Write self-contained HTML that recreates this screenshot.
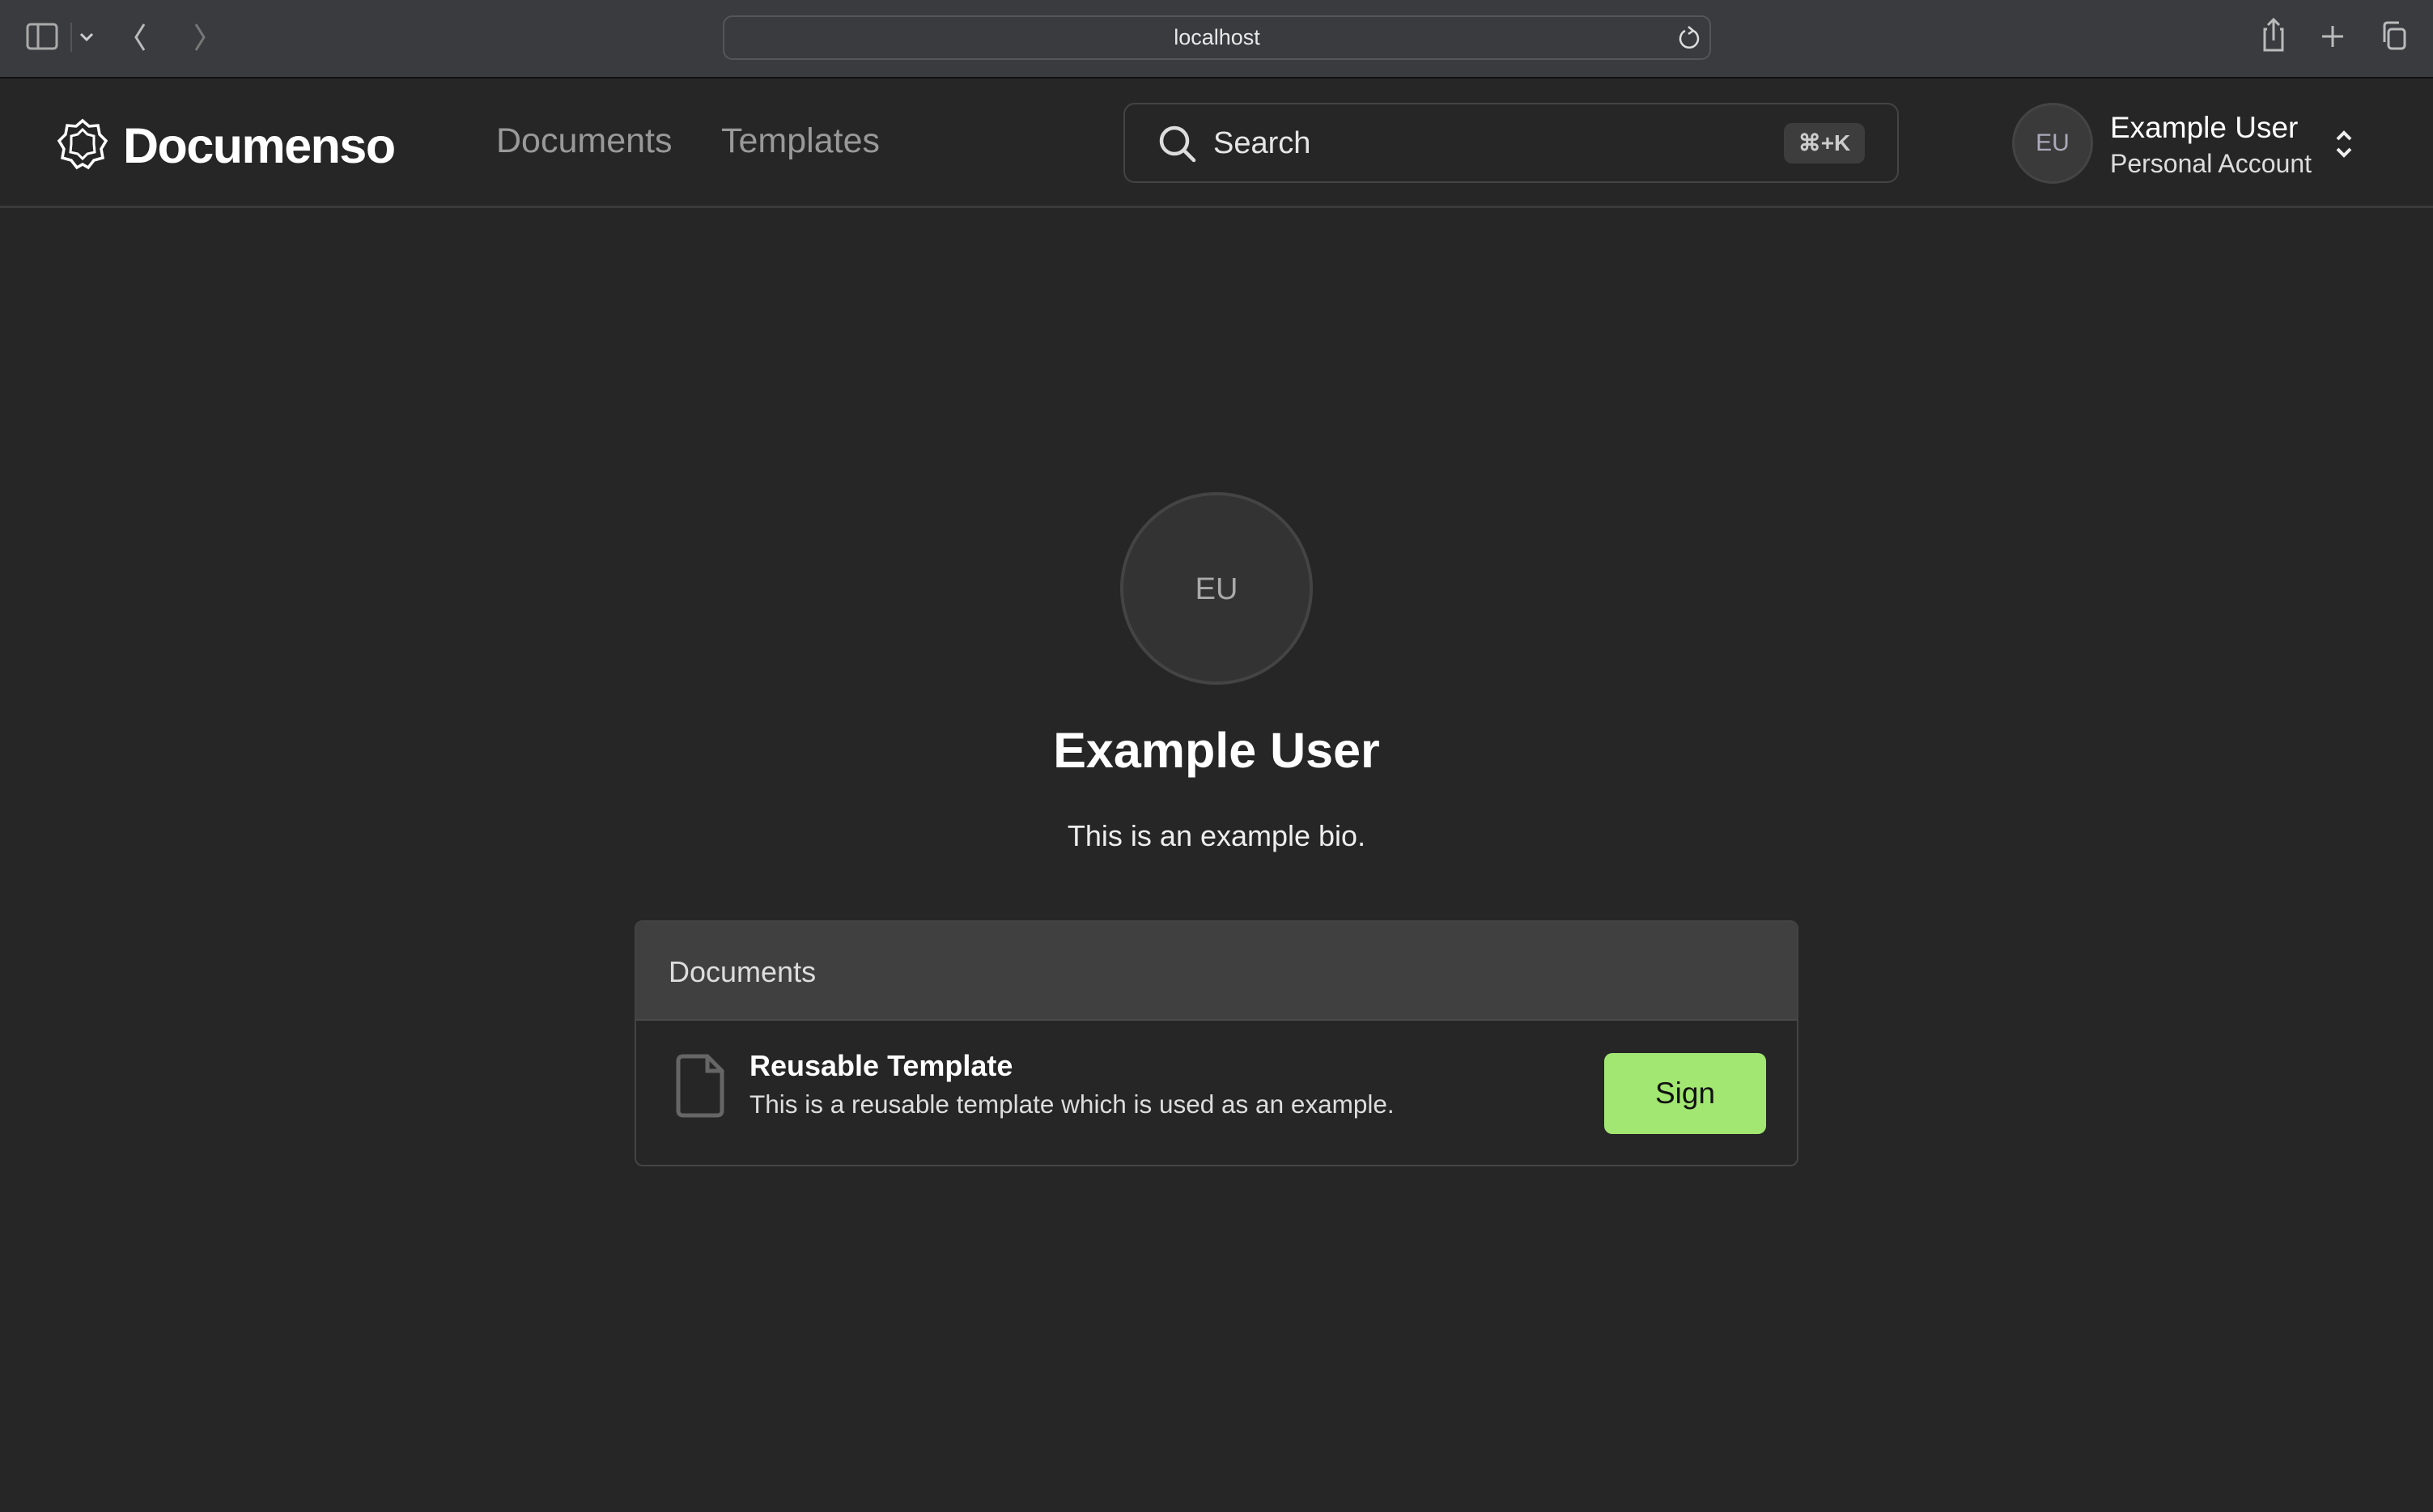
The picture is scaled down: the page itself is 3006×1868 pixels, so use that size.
<!DOCTYPE html>
<html><head><meta charset="utf-8"><style>
*{box-sizing:border-box;margin:0;padding:0}
body{width:3006px;height:1868px;background:#262626;font-family:"Liberation Sans",sans-serif;position:relative;overflow:hidden;color:#fff}
.abs{position:absolute}
.tb{left:0;top:0;width:3006px;height:97px;background:#3a3b3f;border-bottom:2px solid #111}
.hdr{left:0;top:99px;width:3006px;height:158px;border-bottom:3px solid #3a3a3a}
.url{left:893px;top:19px;width:1221px;height:55px;border:2px solid #55565a;border-radius:12px;background:#3a3b3f;text-align:center;line-height:51px;font-size:27px;color:#e8e8e8}
.t{white-space:nowrap}
</style></head><body>
<div class="abs tb"></div>
<svg class="abs" style="left:30px;top:26px" width="110" height="40" viewBox="0 0 110 40">
<rect x="4" y="4" width="36" height="30" rx="4" fill="none" stroke="#aaa" stroke-width="3"/><line x1="17" y1="4" x2="17" y2="34" stroke="#aaa" stroke-width="3"/>
<line x1="58" y1="2" x2="58" y2="38" stroke="#555" stroke-width="2"/>
<path d="M70 16 L77 23 L84 16" fill="none" stroke="#ccc" stroke-width="3"/></svg>
<svg class="abs" style="left:160px;top:26px" width="100" height="40" viewBox="0 0 100 40">
<path d="M18 4 L8 20 L18 36" fill="none" stroke="#bbb" stroke-width="3"/><path d="M82 4 L92 20 L82 36" fill="none" stroke="#777" stroke-width="3"/></svg>
<div class="abs url">localhost</div>
<svg class="abs" style="left:2072px;top:30px" width="30" height="34" viewBox="0 0 30 34"><path d="M20 8 A11 11 0 1 1 10 8" fill="none" stroke="#ddd" stroke-width="2.5"/><path d="M14 3 L20 8 L14 12" fill="none" stroke="#ddd" stroke-width="2.5"/></svg>
<svg class="abs" style="left:2796px;top:22px" width="190" height="44" viewBox="0 0 190 44">
<path d="M5 14 H2 V40 H24 V14 H21 M13 28 V2 M6 9 L13 2 L20 9" fill="none" stroke="#bbb" stroke-width="3"/>
<path d="M86 10 V36 M73 23 H99" stroke="#bbb" stroke-width="3"/>
<rect x="155" y="14" width="20" height="24" rx="4" fill="none" stroke="#bbb" stroke-width="3"/><path d="M150 30 V10 Q150 6 154 6 H168" fill="none" stroke="#bbb" stroke-width="3"/></svg>
<div class="abs hdr"></div>
<svg class="abs" style="left:70px;top:146px" width="64" height="64" viewBox="0 0 64 64"><path d="M32 3 L40 10 L51 9 L53 20 L61 28 L55 38 L57 49 L46 52 L39 61 L32 57 L25 61 L18 52 L7 49 L9 38 L3 28 L11 20 L13 9 L24 10 Z" fill="none" stroke="#fff" stroke-width="3.5"/><path d="M32 14 L38 20 L46 22 L46 32 L47 42 L38 44 L32 50 L26 44 L17 42 L18 32 L18 22 L26 20 Z" fill="none" stroke="#fff" stroke-width="3"/></svg>
<div class="abs t" style="left:152px;top:145px;font-size:61px;font-weight:bold;letter-spacing:-1.5px">Documenso</div>
<div class="abs t" style="left:613px;top:150px;font-size:43px;color:#999">Documents</div>
<div class="abs t" style="left:891px;top:150px;font-size:43px;color:#999">Templates</div>
<div class="abs" style="left:1388px;top:127px;width:958px;height:99px;border:2px solid #444;border-radius:14px"></div>
<svg class="abs" style="left:1430px;top:153px" width="50" height="50" viewBox="0 0 50 50"><circle cx="21" cy="21" r="16" fill="none" stroke="#ddd" stroke-width="4.5"/><line x1="33" y1="33" x2="45" y2="45" stroke="#ddd" stroke-width="4.5" stroke-linecap="round"/></svg>
<div class="abs t" style="left:1499px;top:156px;font-size:38px;color:#e5e5e5">Search</div>
<div class="abs t" style="left:2204px;top:152px;width:100px;height:50px;background:#3d3d3d;border-radius:10px;text-align:center;line-height:50px;font-size:28px;font-weight:bold;color:#ccc">⌘+K</div>
<div class="abs" style="left:2486px;top:127px;width:100px;height:100px;border-radius:50%;background:#3a3a3a;border:3px solid #444;text-align:center;line-height:94px;font-size:30px;color:#aab"><span>EU</span></div>
<div class="abs t" style="left:2607px;top:137px;font-size:37px;color:#fff">Example User</div>
<div class="abs t" style="left:2607px;top:184px;font-size:32px;color:#ddd">Personal Account</div>
<svg class="abs" style="left:2882px;top:158px" width="28" height="40" viewBox="0 0 28 40"><path d="M6 14 L14 6 L22 14 M6 26 L14 34 L22 26" fill="none" stroke="#eee" stroke-width="4"/></svg>
<div class="abs" style="left:1384px;top:608px;width:238px;height:238px;border-radius:50%;background:#333;border:4px solid #444;text-align:center;line-height:232px;font-size:38px;color:#aaa">EU</div>
<div class="abs t" style="left:0;width:3006px;text-align:center;top:892px;font-size:61px;font-weight:bold">Example User</div>
<div class="abs t" style="left:0;width:3006px;text-align:center;top:1012px;font-size:36px;color:#eee">This is an example bio.</div>
<div class="abs" style="left:784px;top:1137px;width:1438px;height:304px;border:2px solid #444;border-radius:10px;overflow:hidden">
<div style="height:122px;background:#404040;border-bottom:2px solid #4a4a4a"></div></div>
<div class="abs t" style="left:826px;top:1180px;font-size:36px;color:#ddd">Documents</div>
<svg class="abs" style="left:834px;top:1302px" width="64" height="80" viewBox="0 0 64 80"><path d="M10 3 H40 L58 21 V70 Q58 76 52 76 H10 Q4 76 4 70 V9 Q4 3 10 3 Z" fill="none" stroke="#666" stroke-width="5"/><path d="M40 3 V21 H58" fill="none" stroke="#666" stroke-width="5"/></svg>
<div class="abs t" style="left:926px;top:1296px;font-size:36px;font-weight:bold">Reusable Template</div>
<div class="abs t" style="left:926px;top:1346px;font-size:31.5px;color:#ddd">This is a reusable template which is used as an example.</div>
<div class="abs" style="left:1982px;top:1301px;width:200px;height:100px;background:#a2e771;border-radius:10px;text-align:center;line-height:100px;font-size:37px;color:#111">Sign</div>
</body></html>
